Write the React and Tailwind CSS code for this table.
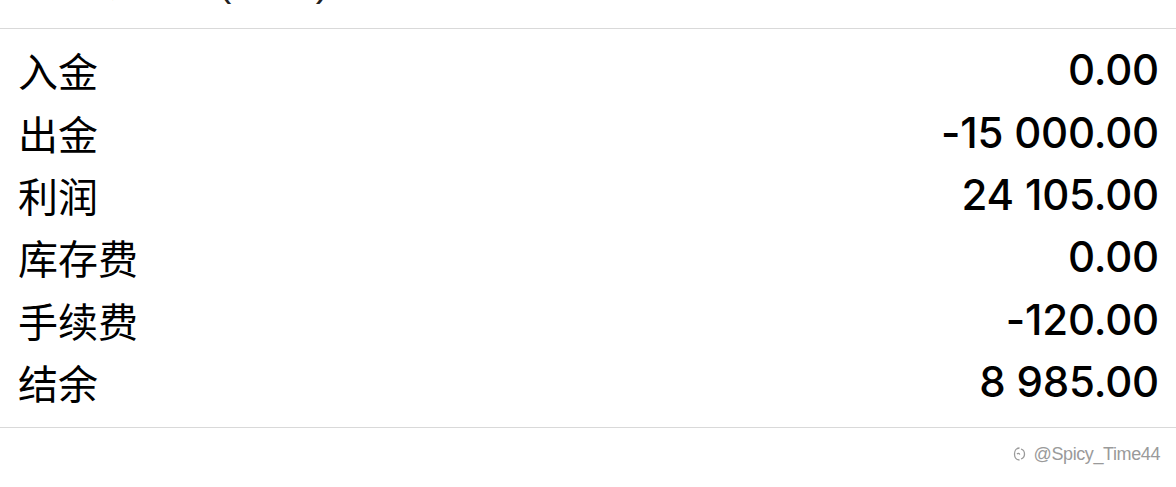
import React from "react";

const rows = [
  { label: "入金", value: "0.00" },
  { label: "出金", value: "-15 000.00" },
  { label: "利润", value: "24 105.00" },
  { label: "库存费", value: "0.00" },
  { label: "手续费", value: "-120.00" },
  { label: "结余", value: "8 985.00" },
];

export default function App() {
  return (
    <div className="w-[1176px] h-[487px] bg-white overflow-hidden font-['Inter','Noto_Sans_CJK_SC',sans-serif] text-black">
      {/* cut-off header */}
      <div className="h-[28px] overflow-hidden px-[18px]">
        <div className="mt-[-38px] text-[40px] leading-none text-[#222] font-['Liberation_Sans','Noto_Sans_CJK_SC',sans-serif] whitespace-nowrap">
          资金明细表(USD)
        </div>
      </div>
      <div className="h-px bg-[#d9d9d9]" />

      <div className="pt-[10px] pb-[14px] pl-[18px] pr-[17px]">
        {rows.map((r) => (
          <div key={r.label} className="h-[62.4px] flex items-center justify-between">
            <span className="text-[40px] leading-none font-['Noto_Sans_CJK_SC',sans-serif]">{r.label}</span>
            <span className="text-[42px] leading-none font-medium tracking-[-0.2px]">{r.value}</span>
          </div>
        ))}
      </div>
      <div className="h-px bg-[#d9d9d9]" />

      <div className="flex justify-end items-center gap-[8px] pr-[16px] pt-[17px] text-[#9a9a9a]">
        <svg className="w-[13px] h-[18px] shrink-0" viewBox="0 0 13 18" fill="none" stroke="currentColor" strokeWidth="1.3">
          <path d="M6.5 3c-3 0-5 2.6-5 6s2 6 5 6" />
          <path d="M8 4c2.1.7 3.5 2.7 3.5 5s-1.4 4.3-3.5 5" />
          <path d="M4 9c.9-1 2.4-.8 2.7.7" />
        </svg>
        <span className="text-[18px] leading-none font-['Liberation_Sans',sans-serif] tracking-[-0.4px]">@Spicy_Time44</span>
      </div>
    </div>
  );
}
